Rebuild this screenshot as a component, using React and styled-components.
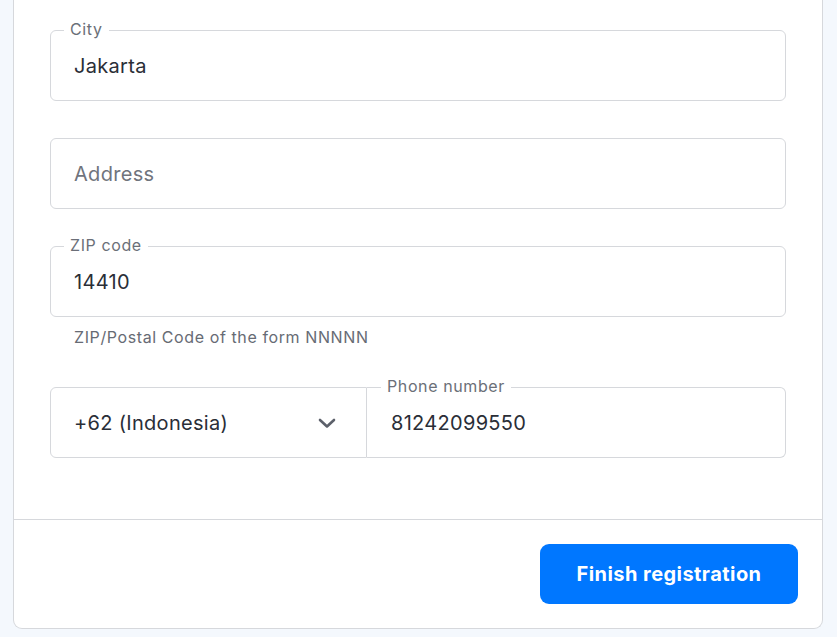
import React from "react";
import styled, { createGlobalStyle } from "styled-components";

const Global = createGlobalStyle`
  html, body { margin: 0; padding: 0; background: #f4f8fd; }
  body { font-family: Inter, "Noto Sans", sans-serif; }
  * { box-sizing: border-box; }
`;

const Page = styled.div`
  width: 837px;
  height: 637px;
  padding: 0 14px 0 13px;
  background: #f4f8fd;
  overflow: hidden;
`;

const Card = styled.div`
  background: #fff;
  border: 1px solid #d6d8dc;
  border-top: none;
  border-radius: 0 0 9px 9px;
  height: 629px;
  display: flex;
  flex-direction: column;
`;

const Body = styled.div`
  padding: 30px 36px 0 36px;
  display: flex;
  flex-direction: column;
  height: 520px;
  border-bottom: 1px solid #d6d8dc;
`;

const Group = styled.div`
  margin-bottom: ${(p) => p.$mb}px;
`;

const Box = styled.div`
  position: relative;
  height: 71px;
  border: 1px solid #d6d8dc;
  border-radius: 6px;
  display: flex;
  align-items: center;
  padding-left: ${(p) => p.$pl || 23}px;
  flex: ${(p) => p.$flex || "none"};
  width: ${(p) => (p.$w ? p.$w + "px" : "auto")};
`;

const Label = styled.span`
  position: absolute;
  top: -12px;
  left: ${(p) => p.$left || 13}px;
  padding: 0 6px;
  background: #fff;
  font-size: 16px;
  line-height: 20px;
  letter-spacing: 0.6px;
  color: #6b6f78;
`;

const Value = styled.span`
  font-size: 20px;
  color: ${(p) => (p.$placeholder ? "#70747d" : "#2a2e37")};
  letter-spacing: 0.3px;
`;

const Helper = styled.div`
  margin-top: 10px;
  padding-left: 24px;
  font-size: 16px;
  line-height: 20px;
  letter-spacing: 0.6px;
  color: #676b74;
`;

const Row = styled.div`
  display: flex;
`;

const SelectBox = styled(Box)`
  border-radius: 6px 0 0 6px;
  justify-content: space-between;
  padding-right: 30px;
`;

const PhoneBox = styled(Box)`
  border-left: none;
  border-radius: 0 6px 6px 0;
`;

const Footer = styled.div`
  flex: 1;
  display: flex;
  justify-content: flex-end;
  align-items: flex-start;
  padding: 24px 24px 0 0;
`;

const Button = styled.button`
  width: 258px;
  height: 60px;
  border: none;
  border-radius: 9px;
  background: #0077ff;
  color: #fff;
  font-family: Inter, "Noto Sans", sans-serif;
  font-size: 20px;
  font-weight: 700;
  letter-spacing: 0.45px;
  cursor: pointer;
`;

const Chevron = () => (
  <svg width="18" height="12" viewBox="0 0 18 12">
    <polyline
      points="2,3 9,9.5 16,3"
      fill="none"
      stroke="#5c606a"
      strokeWidth="2.6"
      strokeLinecap="round"
      strokeLinejoin="round"
    />
  </svg>
);

export default function App() {
  return (
    <>
      <Global />
      <Page>
        <Card>
          <Body>
            <Group $mb={37}>
              <Box>
                <Label>City</Label>
                <Value>Jakarta</Value>
              </Box>
            </Group>
            <Group $mb={37}>
              <Box>
                <Value $placeholder>Address</Value>
              </Box>
            </Group>
            <Group $mb={40}>
              <Box>
                <Label>ZIP code</Label>
                <Value>14410</Value>
              </Box>
              <Helper>ZIP/Postal Code of the form NNNNN</Helper>
            </Group>
            <Row>
              <SelectBox $w={317}>
                <Value>+62 (Indonesia)</Value>
                <Chevron />
              </SelectBox>
              <PhoneBox $flex="1" $pl={24}>
                <Label $left={14}>Phone number</Label>
                <Value>81242099550</Value>
              </PhoneBox>
            </Row>
          </Body>
          <Footer>
            <Button>Finish registration</Button>
          </Footer>
        </Card>
      </Page>
    </>
  );
}
